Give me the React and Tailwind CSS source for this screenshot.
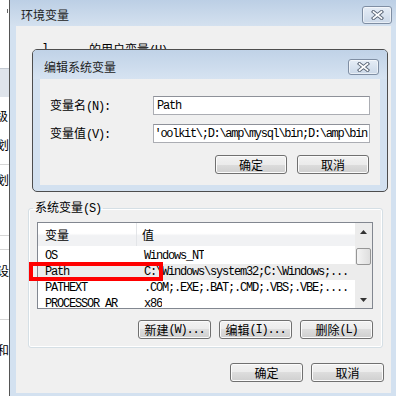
import React from "react";

const mono =
  "font-['Liberation_Mono','Noto_Sans_CJK_SC',monospace] text-[12px] tracking-[-1.2px]";

// win7 style push button
function Btn({ children, className }) {
  return (
    <div
      className={
        "flex items-center justify-center rounded-[3px] border border-[#707070] bg-[linear-gradient(#f2f2f2_0%,#ebebeb_50%,#dddddd_50%,#cfcfcf_100%)] shadow-[inset_0_0_0_1px_#fbfbfb] text-[12px] leading-none text-black " +
        className
      }
    >
      {children}
    </div>
  );
}

function CloseBtn({ className }) {
  return (
    <div
      className={
        "flex items-center justify-center rounded-[3px] border border-[#7f8ea3] bg-[linear-gradient(#e6edf6,#cbd8e8)] shadow-[inset_0_0_0_1px_rgba(255,255,255,0.55)] " +
        className
      }
    >
      <svg width="13" height="10" viewBox="0 0 13 10">
        <path d="M2.5 1.8 L10.5 8.2 M10.5 1.8 L2.5 8.2" stroke="#5b6677" strokeWidth="3.6" strokeLinecap="square" />
        <path d="M2.5 1.8 L10.5 8.2 M10.5 1.8 L2.5 8.2" stroke="#ffffff" strokeWidth="1.7" strokeLinecap="square" />
      </svg>
    </div>
  );
}

function Row({ name, value, selected }) {
  return (
    <div className={"flex h-[16px] items-center " + (selected ? "bg-[#ececec]" : "")}>
      <div className={"w-[99px] shrink-0 overflow-hidden whitespace-nowrap pl-[7px] " + mono}>{name}</div>
      <div className={"overflow-hidden whitespace-nowrap pl-[7px] " + mono}>{value}</div>
    </div>
  );
}

export default function App() {
  return (
    <div className="relative flex h-[396px] w-[396px] overflow-hidden bg-white font-['Noto_Sans_CJK_SC',sans-serif] text-black">
      {/* window behind, only a sliver visible */}
      <div className="flex h-full w-[9px] shrink-0 flex-col overflow-hidden bg-white text-[12px] leading-none">
        <div className="h-[68px] shrink-0">
          <div className="ml-[7px] mt-[9px] h-[4px] w-px bg-[#666]" />
        </div>
        <div className="h-[29px] shrink-0 border-t border-[#c3c9d2] bg-[#dfe4eb]" />
        <div className="flex h-[38px] shrink-0 items-center"><span className="ml-[-4px]">级</span></div>
        <div className="flex h-[20px] shrink-0 items-center"><span className="ml-[-3px]">划</span></div>
        <div className="h-[10px] shrink-0 border-b border-[#d6d6d6]" />
        <div className="flex h-[30px] shrink-0 items-center"><span className="ml-[-3px]">划</span></div>
        <div className="h-[41px] shrink-0 border-b border-[#d6d6d6]" />
        <div className="h-[14px] shrink-0 border-b border-[#d6d6d6]" />
        <div className="flex h-[42px] shrink-0 items-center"><span className="ml-[-3px]">设</span></div>
        <div className="h-[28px] shrink-0 border-b border-[#d6d6d6]" />
        <div className="flex h-[60px] shrink-0 items-center"><span className="ml-[-3px]">和</span></div>
      </div>

      {/* 环境变量 dialog */}
      <div className="flex flex-1 flex-col border-l border-[#555] bg-[#d3e1f0]">
        <div className="flex h-[26px] shrink-0 items-center justify-between bg-[linear-gradient(#bccfe5,#d4e1ef)] pl-[11px] pr-[4px] pt-[3px]">
          <span className="text-[12px] text-[#222]">环境变量</span>
          <CloseBtn className="h-[18px] w-[30px]" />
        </div>
        <div className="mb-[3px] ml-[6px] mr-[5px] flex flex-1 flex-col bg-[#f0f0f0]">
          <div className="flex h-[174px] shrink-0 pt-[16px] text-[12px] leading-[14px]">
            <span className={"ml-[26px] " + mono}>l</span>
            <span className="ml-[41px]">
              的用户变量<span className={mono}>(U)</span>
            </span>
          </div>

          <fieldset className="ml-[12px] mr-[8px] h-[148px] shrink-0 rounded-[3px] border border-[#d5dfe5] pl-[8px] pr-[9px] pt-[6px] shadow-[inset_0_0_0_1px_#ffffff]">
            <legend className="ml-[-4px] px-[2px] text-[12px] leading-[14px]">
              系统变量<span className={mono}>(S)</span>
            </legend>
            <div className="flex h-[87px] border border-[#828790] bg-white">
              <div className="flex flex-1 flex-col overflow-hidden">
                <div className="flex h-[23px] shrink-0 bg-[linear-gradient(#ffffff_0%,#ffffff_45%,#f1f2f4_55%,#f1f2f4_100%)] text-[12px]">
                  <div className="flex w-[99px] items-center border-r border-[#e3e5e8] pl-[7px]">变量</div>
                  <div className="flex items-center pl-[5px]">值</div>
                </div>
                <div className="pt-[2px]">
                  <Row name="OS" value="Windows_NT" />
                  <Row name="Path" value="C:\Windows\system32;C:\Windows;..." selected />
                  <Row name="PATHEXT" value=".COM;.EXE;.BAT;.CMD;.VBS;.VBE;...." />
                  <Row name="PROCESSOR_AR" value="x86" />
                </div>
              </div>
              {/* scrollbar */}
              <div className="flex w-[17px] shrink-0 flex-col bg-[#ececec]">
                <div className="flex h-[17px] items-center justify-center">
                  <svg width="7" height="4" viewBox="0 0 7 4"><polygon points="0,4 7,4 3.5,0" fill="#333" /></svg>
                </div>
                <div className="mx-auto mt-[8px] h-[17px] w-[15px] rounded-[2px] border border-[#969696] bg-[linear-gradient(90deg,#f4f4f4,#dedede)]" />
                <div className="flex-1" />
                <div className="flex h-[17px] items-center justify-center">
                  <svg width="7" height="4" viewBox="0 0 7 4"><polygon points="0,0 7,0 3.5,4" fill="#333" /></svg>
                </div>
              </div>
            </div>
            <div className="mt-[11px] flex justify-end gap-[8px]">
              <Btn className="h-[19px] w-[73px]">新建<span className={mono}>(W)...</span></Btn>
              <Btn className="h-[19px] w-[73px]">编辑<span className={mono}>(I)...</span></Btn>
              <Btn className="h-[19px] w-[73px]">删除<span className={mono}>(L)</span></Btn>
            </div>
          </fieldset>

          <div className="mt-[15px] flex justify-end gap-[8px] pr-[7px]">
            <Btn className="h-[19px] w-[73px]">确定</Btn>
            <Btn className="h-[19px] w-[73px]">取消</Btn>
          </div>
        </div>
      </div>

      {/* 编辑系统变量 dialog on top */}
      <div className="absolute left-[32px] top-[49px] flex h-[143px] w-[356px] flex-col overflow-hidden rounded-[5px] border border-[#4d4d4d] bg-[#d3e1f0]">
        <div className="flex h-[29px] shrink-0 items-center justify-between bg-[linear-gradient(#c0d2e7,#d6e3f1)] pl-[11px] pr-[8px] pt-[5px]">
          <span className="text-[12px] text-[#222]">编辑系统变量</span>
          <CloseBtn className="h-[16px] w-[31px]" />
        </div>
        <div className="mx-[7px] mb-[6px] flex flex-1 flex-col bg-[#f0f0f0] px-[10px] pt-[17px]">
          <div className="flex h-[19px] items-center">
            <div className="w-[103px] text-[12px]">变量名<span className={mono}>(N):</span></div>
            <div className={"flex h-[19px] flex-1 items-center overflow-hidden whitespace-nowrap border border-[#abadb3] border-t-[#8e9199] bg-white pl-[3px] " + mono}>
              Path
            </div>
          </div>
          <div className="mt-[9px] flex h-[19px] items-center">
            <div className="w-[103px] text-[12px]">变量值<span className={mono}>(V):</span></div>
            <div className={"flex h-[19px] flex-1 items-center justify-end overflow-hidden whitespace-nowrap border border-[#abadb3] border-t-[#8e9199] bg-white pr-[2px] " + mono}>
              <span className="shrink-0 tracking-[-1.3px]">'oolkit\;D:\amp\mysql\bin;D:\amp\bin</span>
            </div>
          </div>
          <div className="mt-[12px] flex justify-end gap-[10px] pr-[1px]">
            <Btn className="h-[19px] w-[72px]">确定</Btn>
            <Btn className="h-[19px] w-[72px]">取消</Btn>
          </div>
        </div>
      </div>

      {/* red annotation box */}
      <div className="absolute left-[29px] top-[262px] h-[19px] w-[134px] border-[4px] border-[#ff0000]" />
    </div>
  );
}
